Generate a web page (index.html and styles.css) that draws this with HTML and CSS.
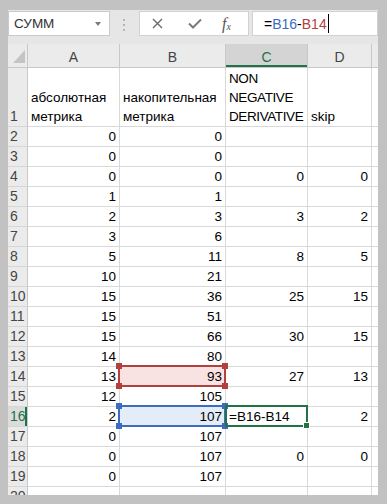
FILE: index.html
```html
<!DOCTYPE html>
<html lang="ru">
<head>
    <meta charset="UTF-8">
    <title>СУММ</title>
    <link rel="stylesheet" href="styles.css">
</head>
<body>
<div class="window">
    <div class="formula-bar">
        <div class="name-box"><span>СУММ</span><span class="caret"></span></div>
        <div class="grip"><i></i><i></i><i></i></div>
        <div class="fx-buttons">
            <svg class="ico-x" width="11" height="11" viewBox="0 0 11 11"><path d="M1 1L10 10M10 1L1 10" stroke="#6a6a6a" stroke-width="1.4" fill="none"/></svg>
            <svg class="ico-ok" width="14" height="11" viewBox="0 0 14 11"><path d="M1 5.5L5 9.5L13 1.5" stroke="#7a7a7a" stroke-width="2" fill="none"/></svg>
            <span class="fx">f<sub>x</sub></span>
        </div>
        <div class="formula"><span>=</span><span class="ref-blue">B16</span><span>-</span><span class="ref-red">B14</span><span class="cursor"></span></div>
    </div>

    <div class="sheet">
        <!-- headers -->
        <div class="corner"><svg width="12" height="13" viewBox="0 0 12 13"><polygon points="12,0 12,13 0,13" fill="#c4c4c4"/></svg></div>
        <div class="ch">A</div>
        <div class="ch">B</div>
        <div class="ch ch-active">C</div>
        <div class="ch">D</div>
        <div class="ch ch-last"></div>

        <!-- row 1 -->
        <div class="rh tall">1</div>
        <div class="c tall"><span>абсолютная</span><span>метрика</span></div>
        <div class="c tall"><span>накопительная</span><span>метрика</span></div>
        <div class="c tall tight"><span>NON</span><span>NEGATIVE</span><span>DERIVATIVE</span></div>
        <div class="c tall"><span>skip</span></div>
        <div class="c e"></div>

        <div class="rh">2</div><div class="c n">0</div><div class="c n">0</div><div class="c"></div><div class="c"></div><div class="c e"></div>
        <div class="rh">3</div><div class="c n">0</div><div class="c n">0</div><div class="c"></div><div class="c"></div><div class="c e"></div>
        <div class="rh">4</div><div class="c n">0</div><div class="c n">0</div><div class="c n">0</div><div class="c n">0</div><div class="c e"></div>
        <div class="rh">5</div><div class="c n">1</div><div class="c n">1</div><div class="c"></div><div class="c"></div><div class="c e"></div>
        <div class="rh">6</div><div class="c n">2</div><div class="c n">3</div><div class="c n">3</div><div class="c n">2</div><div class="c e"></div>
        <div class="rh">7</div><div class="c n">3</div><div class="c n">6</div><div class="c"></div><div class="c"></div><div class="c e"></div>
        <div class="rh">8</div><div class="c n">5</div><div class="c n">11</div><div class="c n">8</div><div class="c n">5</div><div class="c e"></div>
        <div class="rh">9</div><div class="c n">10</div><div class="c n">21</div><div class="c"></div><div class="c"></div><div class="c e"></div>
        <div class="rh">10</div><div class="c n">15</div><div class="c n">36</div><div class="c n">25</div><div class="c n">15</div><div class="c e"></div>
        <div class="rh">11</div><div class="c n">15</div><div class="c n">51</div><div class="c"></div><div class="c"></div><div class="c e"></div>
        <div class="rh">12</div><div class="c n">15</div><div class="c n">66</div><div class="c n">30</div><div class="c n">15</div><div class="c e"></div>
        <div class="rh">13</div><div class="c n">14</div><div class="c n">80</div><div class="c"></div><div class="c"></div><div class="c e"></div>
        <div class="rh">14</div><div class="c n">13</div>
        <div class="c n ref ref-red-cell">93<span class="ref-box red"><i class="h tl"></i><i class="h tr"></i><i class="h bl"></i><i class="h br"></i></span></div>
        <div class="c n">27</div><div class="c n">13</div><div class="c e"></div>
        <div class="rh">15</div><div class="c n">12</div><div class="c n">105</div><div class="c"></div><div class="c"></div><div class="c e"></div>
        <div class="rh rh-active">16</div><div class="c n">2</div>
        <div class="c n ref ref-blue-cell">107<span class="ref-box blue"><i class="h tl"></i><i class="h tr"></i><i class="h bl"></i><i class="h br"></i></span></div>
        <div class="c ref">=B16-B14<span class="active-box"><i class="fill-handle"></i></span></div>
        <div class="c n">2</div><div class="c e"></div>
        <div class="rh">17</div><div class="c n">0</div><div class="c n">107</div><div class="c"></div><div class="c"></div><div class="c e"></div>
        <div class="rh">18</div><div class="c n">0</div><div class="c n">107</div><div class="c n">0</div><div class="c n">0</div><div class="c e"></div>
        <div class="rh">19</div><div class="c n">0</div><div class="c n">107</div><div class="c"></div><div class="c"></div><div class="c e"></div>
        <div class="rh">20</div><div class="c"></div><div class="c"></div><div class="c"></div><div class="c"></div><div class="c e"></div>
    </div>
</div>
</body>
</html>
```

FILE: styles.css
```css
body {
    margin: 0;
    background: #c2c2c2;
    font-family: "Liberation Sans", Arial, sans-serif;
    font-size: 13.5px;
    color: #000;
}

.window {
    margin: 10px 9px 0 8px;
    height: 485px;
    background: #fff;
    overflow: hidden;
}

/* formula bar */
.formula-bar {
    height: 34px;
    box-sizing: border-box;
    padding-top: 1px;
    background: #e6e6e6;
    display: flex;
    align-items: flex-start;
}

.name-box {
    width: 102px;
    height: 25px;
    box-sizing: border-box;
    background: #fff;
    border: 1px solid #cacaca;
    display: flex;
    align-items: center;
    justify-content: space-between;
    padding: 0 8px 0 5px;
    color: #333;
}

.caret {
    width: 0;
    height: 0;
    border-left: 3px solid transparent;
    border-right: 3px solid transparent;
    border-top: 4px solid #7a7a7a;
}

.grip {
    margin: 8px 14px 0 13px;
    display: flex;
    flex-direction: column;
    gap: 3px;
}

.grip i {
    width: 2px;
    height: 2px;
    background: #b4b4b4;
}

.fx-buttons {
    width: 110px;
    height: 25px;
    box-sizing: border-box;
    background: #fff;
    border: 1px solid #d2d2d2;
    display: flex;
    align-items: center;
    padding-left: 12px;
}

.ico-ok {
    margin-left: 25px;
}

.fx {
    margin-left: 20px;
    font-family: "Liberation Serif", serif;
    font-style: italic;
    font-size: 16px;
    color: #555;
}

.fx sub {
    font-size: 10px;
    vertical-align: -1px;
}

.formula {
    flex: 1;
    margin-left: 3px;
    height: 25px;
    box-sizing: border-box;
    background: #fff;
    border: 1px solid #d2d2d2;
    display: flex;
    align-items: center;
    padding-left: 11px;
    font-size: 14px;
}

.ref-blue { color: #3c6cc2; }
.ref-red { color: #b3403d; }

.cursor {
    width: 1px;
    height: 19px;
    background: #000;
    margin-left: 1px;
}

/* grid */
.sheet {
    height: 451px;
    overflow: hidden;
    display: grid;
    grid-template-columns: 20px 92px 106px 82px 64px 6px;
    grid-template-rows: 24px 59px repeat(19, 20px);
}

.corner, .ch, .rh {
    background: #ebebeb;
    color: #444;
    box-sizing: border-box;
}

.corner {
    border-right: 1px solid #c8c8c8;
    border-bottom: 1px solid #c8c8c8;
    display: flex;
    align-items: flex-end;
    justify-content: flex-end;
    padding: 0 2px 4px 0;
}

.ch {
    border-right: 1px solid #c8c8c8;
    border-bottom: 1px solid #c8c8c8;
    text-align: center;
    padding-top: 3px;
    line-height: 20px;
    font-size: 14px;
}

.ch-last {
    border-right: none;
}

.ch-active {
    background: #d4d4d4;
    color: #217346;
    box-shadow: inset 0 -2px 0 #217346;
}

.rh {
    border-right: 1px solid #c8c8c8;
    border-bottom: 1px solid #d6d6d6;
    padding-left: 2px;
    line-height: 19px;
    font-size: 14px;
}

.rh.tall {
    display: flex;
    align-items: flex-end;
}

.rh-active {
    background: #dcdcdc;
    color: #217346;
    box-shadow: inset -2px 0 0 #217346;
}

.c {
    box-sizing: border-box;
    border-right: 1px solid #d9d9d9;
    border-bottom: 1px solid #d9d9d9;
    padding: 0 3px;
    line-height: 19px;
    white-space: nowrap;
    overflow: hidden;
}

.c.e {
    border-right: none;
}

.n {
    text-align: right;
}

.c.tall {
    display: flex;
    flex-direction: column;
    justify-content: flex-end;
}

.c.tight {
    letter-spacing: -0.4px;
}

/* references and active cell */
.ref {
    position: relative;
    overflow: visible;
}

.ref-red-cell { background: #f9e2e2; }
.ref-blue-cell { background: #e4ecf7; }

.ref-box {
    position: absolute;
    left: -2px;
    top: -2px;
    right: -1px;
    bottom: -1px;
    border: 2px solid;
}

.ref-box.red { border-color: #b3403d; }
.ref-box.blue { border-color: #3c6cc2; }

.h {
    position: absolute;
    width: 6px;
    height: 6px;
}

.red .h { background: #b3403d; }
.blue .h { background: #3c6cc2; }

.h.tl { left: -4px; top: -4px; }
.h.tr { right: -4px; top: -4px; }
.h.bl { left: -4px; bottom: -4px; }
.h.br { right: -4px; bottom: -4px; }

.active-box {
    position: absolute;
    left: -1px;
    top: -2px;
    right: -1px;
    bottom: -1px;
    border: 2px solid #217346;
}

.fill-handle {
    position: absolute;
    right: -4px;
    bottom: -4px;
    width: 5px;
    height: 5px;
    background: #217346;
    border: 1px solid #fff;
}
```
